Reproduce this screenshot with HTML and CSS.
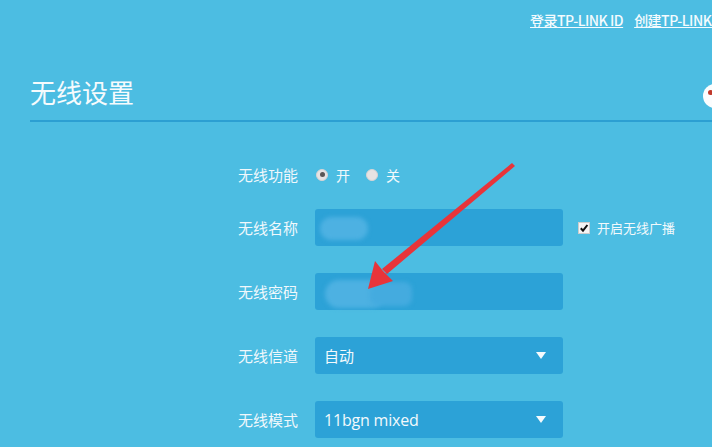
FILE: index.html
```html
<!DOCTYPE html>
<html lang="zh-CN">
<head>
<meta charset="utf-8">
<title>无线设置</title>
<link rel="stylesheet" href="styles.css">
</head>
<body>
<div class="page">
  <div class="topbar">
    <a class="toplink" href="#">登录TP-LINK ID</a>
    <a class="toplink" href="#">创建TP-LINK ID</a>
  </div>
  <div class="titlebar">
    <h1 class="title">无线设置</h1>
    <span class="help"><span class="help-dot"></span></span>
  </div>
  <div class="form">
    <div class="row row-first">
      <div class="label">无线功能</div>
      <div class="control radios">
        <span class="radio-item"><span class="radio on"></span>开</span>
        <span class="radio-item"><span class="radio"></span>关</span>
      </div>
    </div>
    <div class="row">
      <div class="label">无线名称</div>
      <div class="control field"><span class="blob blob1"></span></div>
      <div class="extra"><span class="check">
        <svg width="10" height="10" viewBox="0 0 10 10"><path d="M1.8 5.2 L4 7.6 L8.4 2" fill="none" stroke="#111" stroke-width="2"/></svg>
      </span>开启无线广播</div>
    </div>
    <div class="row">
      <div class="label">无线密码</div>
      <div class="control field"><span class="blob blob2"></span><span class="blob blob3"></span></div>
    </div>
    <div class="row">
      <div class="label">无线信道</div>
      <div class="control field select"><span class="value">自动</span><span class="caret"></span></div>
    </div>
    <div class="row">
      <div class="label">无线模式</div>
      <div class="control field select"><span class="value latin">11bgn mixed</span><span class="caret"></span></div>
    </div>
  </div>
  <svg class="arrow" width="712" height="447" viewBox="0 0 712 447">
    <polygon points="512,163 515,166 387,274 382,269" fill="#e8343a"/>
    <polygon points="368,289 375,261 383,271 393,281" fill="#e8343a"/>
  </svg>
</div>
</body>
</html>
```
FILE: styles.css
```css
html, body {
  margin: 0;
  padding: 0;
}
body {
  background: #4cbde2;
  font-family: "Noto Sans CJK SC", "Noto Sans", sans-serif;
  color: #f2f9fc;
  overflow: hidden;
  width: 712px;
  height: 447px;
}
.page {
  position: relative;
  width: 712px;
  height: 447px;
  overflow: hidden;
}
.topbar {
  display: flex;
  gap: 11px;
  padding: 10px 0 0 530px;
  height: 22px;
  white-space: nowrap;
}
.toplink {
  color: #f4fbfe;
  font-size: 14px;
  line-height: 20px;
  text-decoration: underline;
  letter-spacing: -0.5px;
  font-weight: 500;
}
.titlebar {
  position: relative;
  margin: 0 0 0 30px;
  padding-top: 44px;
  border-bottom: 2px solid #2c9fd2;
  height: 44px;
}
.title {
  margin: 0;
  font-size: 26px;
  font-weight: normal;
  line-height: 32px;
  color: #f6fbfd;
}
.help {
  position: absolute;
  right: -15px;
  top: 52px;
  width: 24px;
  height: 24px;
  border-radius: 50%;
  background: #fbfdfe;
}
.help-dot {
  position: absolute;
  left: 5px;
  top: 6px;
  width: 5px;
  height: 5px;
  border-radius: 50%;
  background: #c0392b;
}
.form {
  padding: 34px 0 0 222px;
  display: flex;
  flex-direction: column;
  gap: 27px;
}
.row {
  display: flex;
  align-items: center;
  height: 37px;
}
.row-first {
  margin-bottom: -11px;
}
.label {
  width: 76px;
  text-align: right;
  font-size: 15px;
  margin-right: 17px;
  color: #f0f8fc;
}
.control {
  width: 248px;
  height: 37px;
  box-sizing: border-box;
  display: flex;
  align-items: center;
}
.radios {
  gap: 16px;
  padding-left: 1px;
  font-size: 14px;
}
.radio-item {
  display: flex;
  align-items: center;
  gap: 8px;
}
.radio {
  width: 12px;
  height: 12px;
  border-radius: 50%;
  background: #e6e3e3;
  box-sizing: border-box;
  border: 1px solid #d8d4d4;
  display: flex;
  align-items: center;
  justify-content: center;
}
.radio.on::after {
  content: "";
  width: 5px;
  height: 5px;
  border-radius: 50%;
  background: #5a5656;
}
.field {
  position: relative;
  background: #2ca2d7;
  border-radius: 3px;
  padding: 0 10px 0 9px;
}
.select {
  justify-content: space-between;
}
.value {
  font-size: 15px;
  color: #f2f9fc;
}
.latin {
  font-family: "Open Sans", "Noto Sans", sans-serif;
  font-size: 16px;
  letter-spacing: -0.2px;
}
.caret {
  width: 0;
  height: 0;
  border-left: 5px solid transparent;
  border-right: 5px solid transparent;
  border-top: 7px solid #f4fafd;
  margin-right: 7px;
}
.extra {
  display: flex;
  align-items: center;
  gap: 7px;
  margin-left: 15px;
  font-size: 13px;
}
.check {
  width: 10px;
  height: 10px;
  background: #f4f4f4;
  border: 1px solid #ccc;
  display: flex;
}
.blob {
  position: absolute;
  background: #4db1e2;
  filter: blur(2px);
}
.blob1 {
  left: 5px;
  top: 8px;
  width: 48px;
  height: 23px;
  border-radius: 12px;
}
.blob2 {
  left: 10px;
  top: 7px;
  width: 60px;
  height: 28px;
  border-radius: 14px;
}
.blob3 {
  left: 55px;
  top: 9px;
  width: 42px;
  height: 24px;
  border-radius: 8px;
  background: #44abdf;
}
.arrow {
  position: absolute;
  left: 0;
  top: 0;
  pointer-events: none;
}
```
